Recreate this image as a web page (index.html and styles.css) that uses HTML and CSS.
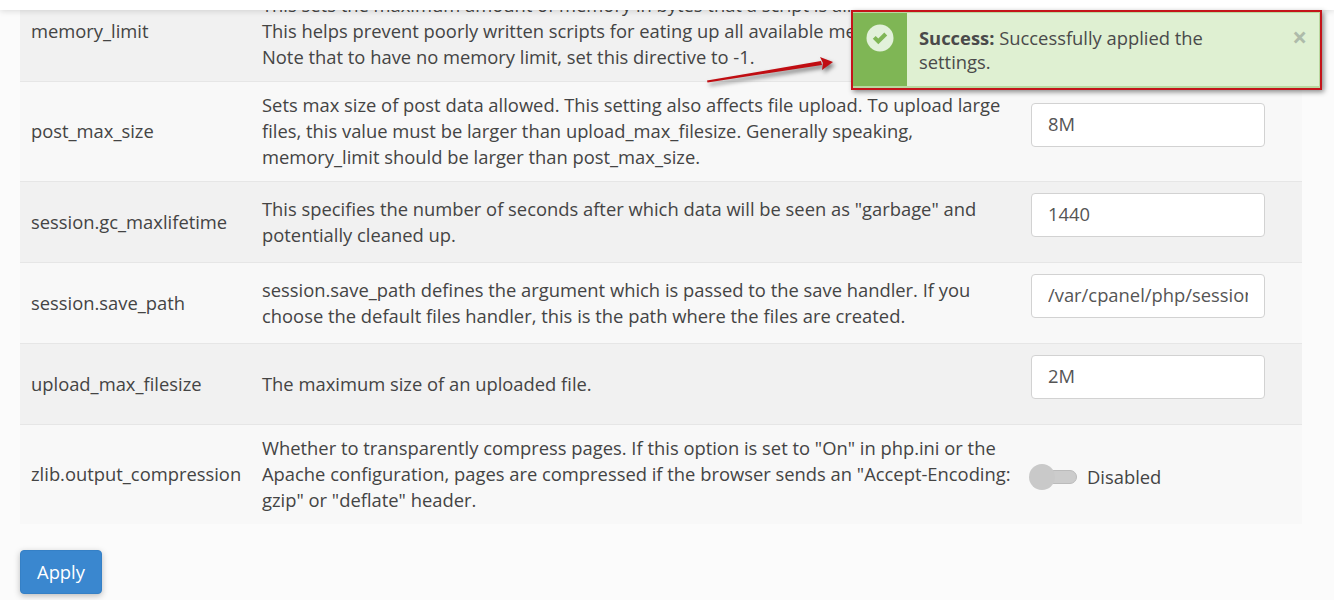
FILE: index.html
```html
<!DOCTYPE html>
<html lang="en">
<head>
    <meta charset="UTF-8">
    <meta name="viewport" content="width=device-width, initial-scale=1.0">
    <title>MultiPHP INI Editor</title>
    <link rel="stylesheet" href="styles.css">
</head>
<body>
    <div class="top-bar"></div>

    <div class="alert-frame">
        <div class="alert">
            <div class="alert-icon">
                <svg width="28" height="28" viewBox="0 0 28 28">
                    <circle cx="14" cy="14" r="13.5" fill="#e2f1da"/>
                    <path d="M6.8 14.8l2.9-2.9 2.6 2.6 6-6 2.9 2.9-8.9 8.9z" fill="#7fb655"/>
                </svg>
            </div>
            <div class="alert-text"><strong>Success:</strong> Successfully applied the settings.</div>
            <span class="alert-close">&times;</span>
        </div>
    </div>

    <svg class="arrow" width="140" height="50" viewBox="0 0 140 50">
        <path d="M3 33.5L117 14l1 4L3.5 35.5z" fill="#c00d12"/>
        <path d="M116 10l13 5-11 8 1-7z" fill="#c00d12"/>
    </svg>

    <table class="settings">
        <tr>
            <td class="name">memory_limit</td>
            <td class="desc">This sets the maximum amount of memory in bytes that a script is allowed to allocate.<br>This helps prevent poorly written scripts for eating up all available memory on a server.<br>Note that to have no memory limit, set this directive to -1.</td>
            <td class="value"></td>
        </tr>
        <tr>
            <td class="name">post_max_size</td>
            <td class="desc">Sets max size of post data allowed. This setting also affects file upload. To upload large files, this value must be larger than upload_max_filesize. Generally speaking, memory_limit should be larger than post_max_size.</td>
            <td class="value"><input class="field" type="text" value="8M"></td>
        </tr>
        <tr>
            <td class="name">session.gc_maxlifetime</td>
            <td class="desc">This specifies the number of seconds after which data will be seen as "garbage" and potentially cleaned up.</td>
            <td class="value"><input class="field" type="text" value="1440"></td>
        </tr>
        <tr>
            <td class="name">session.save_path</td>
            <td class="desc">session.save_path defines the argument which is passed to the save handler. If you choose the default files handler, this is the path where the files are created.</td>
            <td class="value"><input class="field" type="text" value="/var/cpanel/php/sessions/ea-php56"></td>
        </tr>
        <tr>
            <td class="name">upload_max_filesize</td>
            <td class="desc">The maximum size of an uploaded file.</td>
            <td class="value"><input class="field" type="text" value="2M"></td>
        </tr>
        <tr>
            <td class="name">zlib.output_compression</td>
            <td class="desc">Whether to transparently compress pages. If this option is set to "On" in php.ini or the Apache configuration, pages are compressed if the browser sends an "Accept-Encoding: gzip" or "deflate" header.</td>
            <td class="value">
                <div class="toggle-row">
                    <span class="toggle"><span class="knob"></span></span>
                    <span>Disabled</span>
                </div>
            </td>
        </tr>
    </table>

    <button class="btn">Apply</button>
</body>
</html>
```

FILE: styles.css
```css
html, body {
    height: 600px;
    overflow: hidden;
}

body {
    font-family: "Open Sans", sans-serif;
    font-size: 18.36px;
    line-height: 26px;
    color: #444;
    background-color: #fbfbfb;
    margin: 0;
    padding: 0 32px 0 20px;
}

.top-bar {
    position: absolute;
    top: 0;
    left: 0;
    right: 0;
    height: 10px;
    background-color: #fff;
    box-shadow: 0 1px 6px rgba(0, 0, 0, 0.14);
    z-index: 2;
}

.settings {
    width: 1282px;
    margin-top: -18px;
    border-collapse: collapse;
    table-layout: fixed;
}

.settings tr {
    border-bottom: 1px solid #e6e6e6;
}

.settings tr:last-child {
    border-bottom: none;
}

.settings tr:nth-child(odd) {
    background-color: #f1f1f1;
}

.settings tr:nth-child(even) {
    background-color: #f8f8f8;
}

.settings td {
    padding: 10px 11px 11px;
    vertical-align: middle;
}

.settings .desc {
    padding-left: 0;
    padding-right: 5px;
}

.name {
    width: 220px;
}

.desc {
    width: 753px;
}

.value {
    width: 260px;
}

.field {
    display: block;
    box-sizing: border-box;
    width: 234px;
    height: 44px;
    margin: 1px 0 14px;
    padding: 0 16px 3px;
    font-family: "Open Sans", sans-serif;
    font-size: 18.36px;
    color: #555;
    background-color: #fff;
    border: 1px solid #d2d2d2;
    border-radius: 4px;
}

.toggle-row {
    display: flex;
    align-items: center;
    gap: 10px;
    margin-top: 5px;
}

.toggle {
    position: relative;
    display: block;
    width: 46px;
    height: 14px;
    background-color: #ccc;
    border: 1px solid #bbb;
    box-sizing: border-box;
    border-radius: 7px;
}

.knob {
    position: absolute;
    top: -7px;
    left: -3px;
    width: 26px;
    height: 26px;
    background-color: #c9c9c9;
    border-radius: 50%;
}

.btn {
    display: block;
    width: 82px;
    height: 44px;
    margin-top: 26px;
    padding: 0 0 2px;
    font-family: "Open Sans", sans-serif;
    font-size: 18.36px;
    color: #fff;
    background-color: #3a87cf;
    border: 1px solid #3580c6;
    border-radius: 4px;
    box-shadow: 0 2px 6px rgba(0, 0, 0, 0.25);
}

.alert-frame {
    position: absolute;
    top: 10px;
    left: 851px;
    width: 471px;
    height: 80px;
    box-sizing: border-box;
    border: 2px solid #c4141a;
    box-shadow: 2px 2px 5px rgba(0, 0, 0, 0.45);
    z-index: 3;
}

.alert {
    display: flex;
    height: 100%;
    box-sizing: border-box;
    background-color: #dff0d2;
    border: 1px solid #b9d8a0;
    border-width: 1px 1px 2px 0;
}

.alert-icon {
    width: 54px;
    padding: 11px 0 0 13px;
    box-sizing: border-box;
    background-color: #7fb655;
}

.alert-text {
    width: 340px;
    padding: 13px 0 0 12px;
    line-height: 23.5px;
    color: #4a4a4a;
}

.alert-close {
    position: absolute;
    top: 12px;
    right: 13px;
    font-size: 26px;
    font-weight: bold;
    color: #aebbaa;
}

.arrow {
    position: absolute;
    top: 47px;
    left: 704px;
    z-index: 3;
    filter: drop-shadow(2px 3px 2px rgba(0, 0, 0, 0.5));
}
```
